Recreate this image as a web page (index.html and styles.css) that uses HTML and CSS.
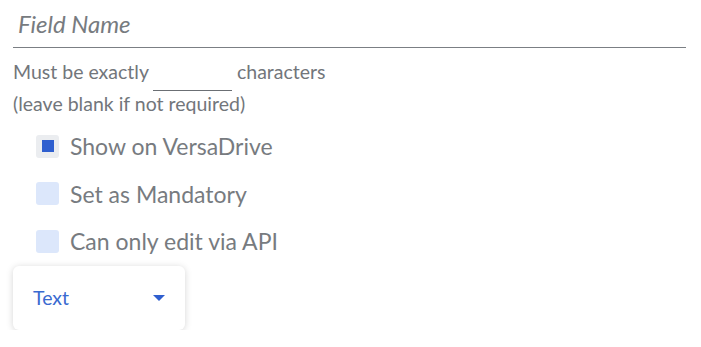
FILE: index.html
```html
<!DOCTYPE html>
<html>
<head>
<meta charset="utf-8">
<link rel="stylesheet" href="styles.css">
</head>
<body>
<div class="form">
  <div class="field-name">Field Name</div>
  <div class="length-row">
    <span>Must be exactly</span>
    <span class="length-input"></span>
    <span>characters</span>
  </div>
  <div class="hint">(leave blank if not required)</div>
  <div class="checks">
    <div class="check"><span class="box checked"><span class="dot"></span></span><span class="label">Show on VersaDrive</span></div>
    <div class="check"><span class="box"></span><span class="label">Set as Mandatory</span></div>
    <div class="check"><span class="box"></span><span class="label">Can only edit via API</span></div>
  </div>
  <div class="select">
    <span class="select-text">Text</span>
    <svg class="caret" width="12" height="6" viewBox="0 0 12 6"><path d="M0 0 H12 L6 6 Z" fill="#2f5fcf"/></svg>
  </div>
</div>
</body>
</html>
```
FILE: styles.css
```css
html, body {
  margin: 0;
  padding: 0;
  background: #ffffff;
}
body {
  font-family: Lato, "Open Sans", sans-serif;
  color: #72767b;
}
.form {
  padding: 0 15px 0 13px;
}
.field-name {
  font-style: italic;
  font-size: 24px;
  color: #777b80;
  padding: 9px 0 0 5px;
  height: 48px;
  box-sizing: border-box;
  border-bottom: 1px solid #7b7f84;
  line-height: 30px;
}
.length-row {
  display: flex;
  align-items: flex-start;
  font-size: 19.5px;
  margin-top: 12px;
  line-height: 24px;
  height: 32px;
}
.length-input {
  width: 79px;
  height: 31px;
  border-bottom: 1px solid #6b6f74;
  margin: 0 5px 0 4px;
  box-sizing: border-box;
  flex-shrink: 0;
}
.hint {
  font-size: 19.5px;
  line-height: 24px;
}
.checks {
  display: flex;
  flex-direction: column;
  gap: 24.5px;
  padding: 18.5px 0 0 23px;
}
.check {
  display: flex;
  align-items: center;
  gap: 11px;
  height: 23px;
}
.box {
  width: 23px;
  height: 23px;
  border-radius: 3px;
  background: #dce7fb;
  display: flex;
  align-items: center;
  justify-content: center;
  flex-shrink: 0;
}
.box.checked {
  background: #ebedf0;
}
.dot {
  width: 12px;
  height: 12px;
  background: #2f5fcf;
}
.label {
  font-size: 23px;
  color: #777b80;
}
.select {
  margin-top: 13px;
  width: 172px;
  height: 64px;
  box-sizing: border-box;
  border-radius: 6px;
  background: #fff;
  box-shadow: 0 1px 7px rgba(0, 0, 0, 0.17);
  display: flex;
  align-items: center;
  justify-content: space-between;
  padding: 0 20px 0 20px;
}
.select-text {
  font-size: 19.5px;
  color: #3a6ad0;
}
.caret {
  display: block;
}
```
